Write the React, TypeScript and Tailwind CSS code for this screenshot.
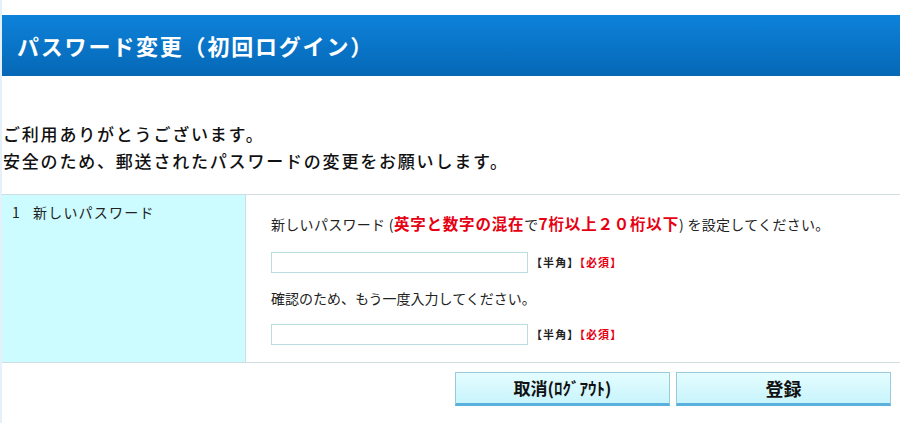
import React from 'react';

const jp = { fontFamily: '"Noto Sans CJK JP", "Noto Sans", sans-serif' };

const InputRow = () => (
  <div className="flex items-center">
    <input
      type="password"
      className="w-[257px] h-[21px] border border-[#bcdce0] bg-white outline-none"
    />
    <span className="ml-[3px] text-[11px] font-bold leading-none tracking-[1.1px]">
      <span className="text-[#222]">【半角】</span>
      <span className="text-[#e60012]">【必須】</span>
    </span>
  </div>
);

export default function App() {
  return (
    <div style={jp} className="w-[900px] h-[423px] bg-white border-l-2 border-[#e4f1fb] overflow-hidden text-[#222]">
      <div className="pt-[15px]">
        <div className="h-[61px] bg-gradient-to-b from-[#0d82da] to-[#0668b6] flex items-center pl-[15px]">
          <h1 className="text-white text-[22px] font-bold tracking-[1.8px]">パスワード変更（初回ログイン）</h1>
        </div>
      </div>

      <div className="mt-[44px] pl-[1px] text-[17px] font-medium leading-[27px] tracking-[1.8px] text-[#111]">
        <p>ご利用ありがとうございます。</p>
        <p>安全のため、郵送されたパスワードの変更をお願いします。</p>
      </div>

      <div className="mt-[20px] flex border-y border-[#cfdde3] h-[169px]">
        <div className="w-[244px] bg-[#ccfcff] border-r border-[#cfdde3] pl-[10px] pt-[8px] text-[14px] leading-[18px] tracking-[1.2px]">
          <span className="mr-[12px]">1</span>新しいパスワード
        </div>
        <div className="flex-1 pl-[25px] pt-[19px] text-[14px] leading-[18px]">
          <p className="tracking-[0.3px]">
            新しいパスワード (
            <span className="text-[#e60012] font-bold text-[15.5px] tracking-[0.8px]">英字と数字の混在</span>で
            <span className="text-[#e60012] font-bold text-[15.5px] tracking-[0.8px]">7桁以上２０桁以下</span>
            ) を設定してください。
          </p>
          <div className="mt-[19px]">
            <InputRow />
          </div>
          <p className="mt-[16px]">確認のため、もう一度入力してください。</p>
          <div className="mt-[17px]">
            <InputRow />
          </div>
        </div>
      </div>

      <div className="mt-[9px] flex justify-end gap-[6px] pr-[9px]">
        <button className="w-[215px] h-[34px] bg-gradient-to-b from-[#e4fdff] to-[#c8f4fc] border border-[#9cc8dc] border-b-[3px] border-b-[#5ab0dc] text-[17px] font-bold text-[#111]">
          取消(ﾛｸﾞｱｳﾄ)
        </button>
        <button className="w-[215px] h-[34px] bg-gradient-to-b from-[#e4fdff] to-[#c8f4fc] border border-[#9cc8dc] border-b-[3px] border-b-[#5ab0dc] text-[18px] font-bold text-[#111]">
          登録
        </button>
      </div>
    </div>
  );
}
